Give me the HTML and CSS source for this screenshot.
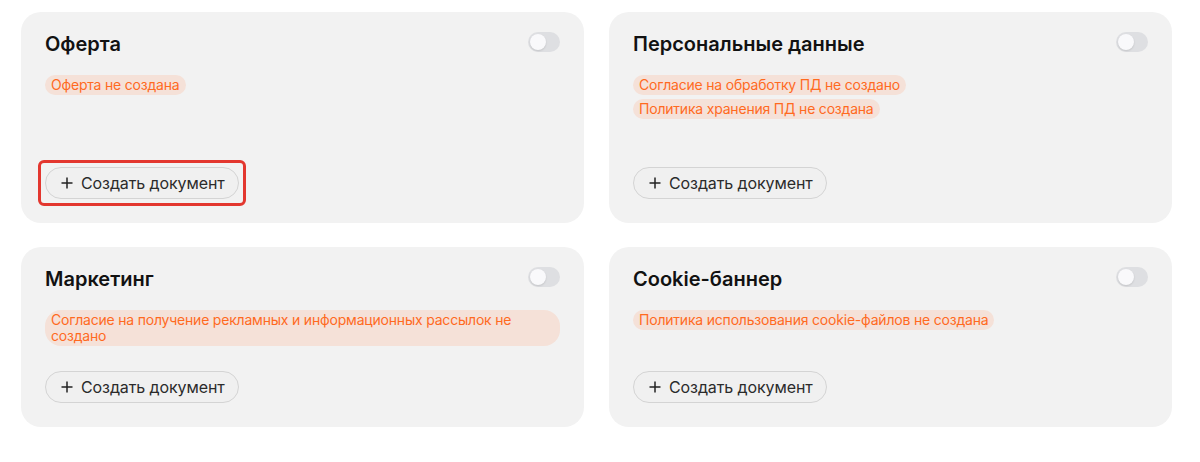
FILE: index.html
```html
<!DOCTYPE html>
<html lang="ru">

<head>
    <meta charset="UTF-8">
    <meta name="viewport" content="width=device-width, initial-scale=1">
    <title>Документы</title>
    <link rel="stylesheet" href="styles.css">
</head>

<body>
    <div class="docs">
        <div class="card">
            <div class="card-head">
                <h3 class="card-title">Оферта</h3>
                <span class="switch"><span class="knob"></span></span>
            </div>
            <div class="badges">
                <span class="badge">Оферта не создана</span>
            </div>
            <div class="card-foot">
                <button class="btn btn-marked">
                    <svg class="plus" width="12" height="12" viewBox="0 0 12 12"><path d="M6 0.5v11M0.5 6h11" /></svg>
                    Создать документ
                </button>
            </div>
        </div>

        <div class="card">
            <div class="card-head">
                <h3 class="card-title">Персональные данные</h3>
                <span class="switch"><span class="knob"></span></span>
            </div>
            <div class="badges">
                <span class="badge">Согласие на обработку ПД не создано</span>
                <span class="badge">Политика хранения ПД не создана</span>
            </div>
            <div class="card-foot">
                <button class="btn">
                    <svg class="plus" width="12" height="12" viewBox="0 0 12 12"><path d="M6 0.5v11M0.5 6h11" /></svg>
                    Создать документ
                </button>
            </div>
        </div>

        <div class="card">
            <div class="card-head">
                <h3 class="card-title">Маркетинг</h3>
                <span class="switch"><span class="knob"></span></span>
            </div>
            <div class="badges">
                <span class="badge badge-wide">Согласие на получение рекламных и информационных рассылок не создано</span>
            </div>
            <div class="card-foot">
                <button class="btn">
                    <svg class="plus" width="12" height="12" viewBox="0 0 12 12"><path d="M6 0.5v11M0.5 6h11" /></svg>
                    Создать документ
                </button>
            </div>
        </div>

        <div class="card">
            <div class="card-head">
                <h3 class="card-title">Cookie-баннер</h3>
                <span class="switch"><span class="knob"></span></span>
            </div>
            <div class="badges">
                <span class="badge">Политика использования cookie-файлов не создана</span>
            </div>
            <div class="card-foot">
                <button class="btn">
                    <svg class="plus" width="12" height="12" viewBox="0 0 12 12"><path d="M6 0.5v11M0.5 6h11" /></svg>
                    Создать документ
                </button>
            </div>
        </div>
    </div>
</body>

</html>
```

FILE: styles.css
```css
body {
    margin: 0;
    background: #fff;
    font-family: Inter, "Noto Sans", sans-serif;
    color: #111;
}

.docs {
    display: grid;
    grid-template-columns: 563px 563px;
    grid-template-rows: 211px auto;
    column-gap: 25px;
    row-gap: 24px;
    padding: 12px 21px;
}

.card {
    display: flex;
    flex-direction: column;
    background: #f2f2f2;
    border-radius: 20px;
    padding: 16px 24px 24px;
}

.card-head {
    display: flex;
    align-items: flex-start;
    justify-content: space-between;
    height: 28px;
    margin-bottom: 19px;
}

.card-title {
    margin: 2px 0 0;
    font-size: 20px;
    line-height: 28px;
    font-weight: 600;
    color: #121212;
}

/* toggle, switched off */
.switch {
    position: relative;
    flex: none;
    width: 32px;
    height: 20px;
    border-radius: 10px;
    background: #dedfe2;
    margin-top: 4px;
}

.switch .knob {
    position: absolute;
    left: 2px;
    top: 2px;
    width: 16px;
    height: 16px;
    border-radius: 50%;
    background: #f9f9fb;
    box-shadow: 0 1px 2px rgba(0, 0, 0, 0.12);
}

.badges {
    display: flex;
    flex-direction: column;
    align-items: flex-start;
    gap: 4px;
    margin-bottom: 25px;
}

.badge {
    display: inline-block;
    padding: 2px 6px;
    border-radius: 10px;
    background: #f5e1d8;
    color: #ff6a1f;
    font-size: 14px;
    line-height: 16px;
    letter-spacing: -0.2px;
}

.badge-wide {
    align-self: stretch;
    border-radius: 16px;
}

.card-foot {
    margin-top: auto;
}

.btn {
    position: relative;
    display: inline-flex;
    align-items: center;
    gap: 8px;
    height: 32px;
    padding: 0 13px 0 15px;
    border: 1px solid #d4d4d4;
    border-radius: 16px;
    background: #f0f0f0;
    color: #2b2b2b;
    font-family: inherit;
    font-size: 16px;
    letter-spacing: -0.1px;
    cursor: pointer;
}

.btn .plus {
    flex: none;
    stroke: #222;
    stroke-width: 1.5;
}

/* red frame around the highlighted button */
.btn-marked::after {
    content: "";
    position: absolute;
    top: -8px;
    left: -8px;
    right: -8px;
    bottom: -8px;
    border: 3px solid #e3372f;
    border-radius: 6px;
}
```
